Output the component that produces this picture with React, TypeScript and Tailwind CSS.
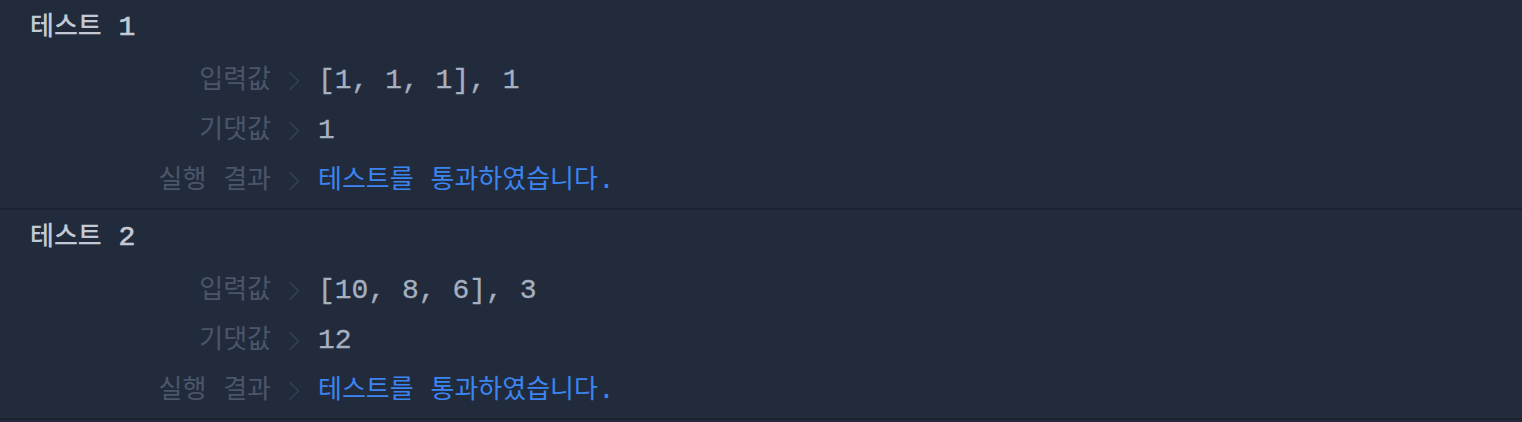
import React from 'react';

type Row = { label: string; value: string; pass?: boolean };

const tests: { title: string; rows: Row[] }[] = [
  {
    title: '테스트 1',
    rows: [
      { label: '입력값', value: '[1, 1, 1], 1' },
      { label: '기댓값', value: '1' },
      { label: '실행 결과', value: '테스트를 통과하였습니다.', pass: true },
    ],
  },
  {
    title: '테스트 2',
    rows: [
      { label: '입력값', value: '[10, 8, 6], 3' },
      { label: '기댓값', value: '12' },
      { label: '실행 결과', value: '테스트를 통과하였습니다.', pass: true },
    ],
  },
];

// hangul falls back to a wider font, so size it to keep the mono rhythm
const Mixed = ({ text }: { text: string }) => (
  <>
    {text.split(/([\uAC00-\uD7A3]+)/).map((part, i) =>
      /[\uAC00-\uD7A3]/.test(part) ? (
        <span key={i} className="text-[26px] [-webkit-text-stroke:0px]">
          {part}
        </span>
      ) : (
        <span key={i}>{part}</span>
      )
    )}
  </>
);

const Chevron = () => (
  <svg width="12" height="20" viewBox="0 0 12 20" fill="none" className="shrink-0">
    <path d="M1.5 1 L10.5 10 L1.5 19" stroke="#364256" strokeWidth="1.3" />
  </svg>
);

const TestBlock = ({ title, rows }: { title: string; rows: Row[] }) => (
  <div className="h-[210px] border-b-2 border-[#1b2231]">
    <div className="flex h-[56px] items-center pl-[30px] font-medium text-[#c3cad5] whitespace-pre [-webkit-text-stroke:0.7px_#c3cad5]">
      <Mixed text={title} />
    </div>
    {rows.map((r) => (
      <div key={r.label} className="flex h-[50px] items-center whitespace-pre">
        <div className="w-[271px] shrink-0 text-right text-[#4b566a]">
          <Mixed text={r.label} />
        </div>
        <div className="ml-[17px] mr-[18px] flex items-center">
          <Chevron />
        </div>
        <div
          className={
            r.pass
              ? 'text-[#3b85f2]'
              : 'text-[#a6b0c0] [-webkit-text-stroke:0.3px_#a6b0c0]'
          }
        >
          <Mixed text={r.value} />
        </div>
      </div>
    ))}
  </div>
);

export default function App() {
  return (
    <div className="min-h-[422px] w-full bg-[#222b3c] font-['Liberation_Mono','Noto_Sans_CJK_KR',monospace] text-[28px] leading-none">
      {tests.map((t) => (
        <TestBlock key={t.title} title={t.title} rows={t.rows} />
      ))}
    </div>
  );
}
